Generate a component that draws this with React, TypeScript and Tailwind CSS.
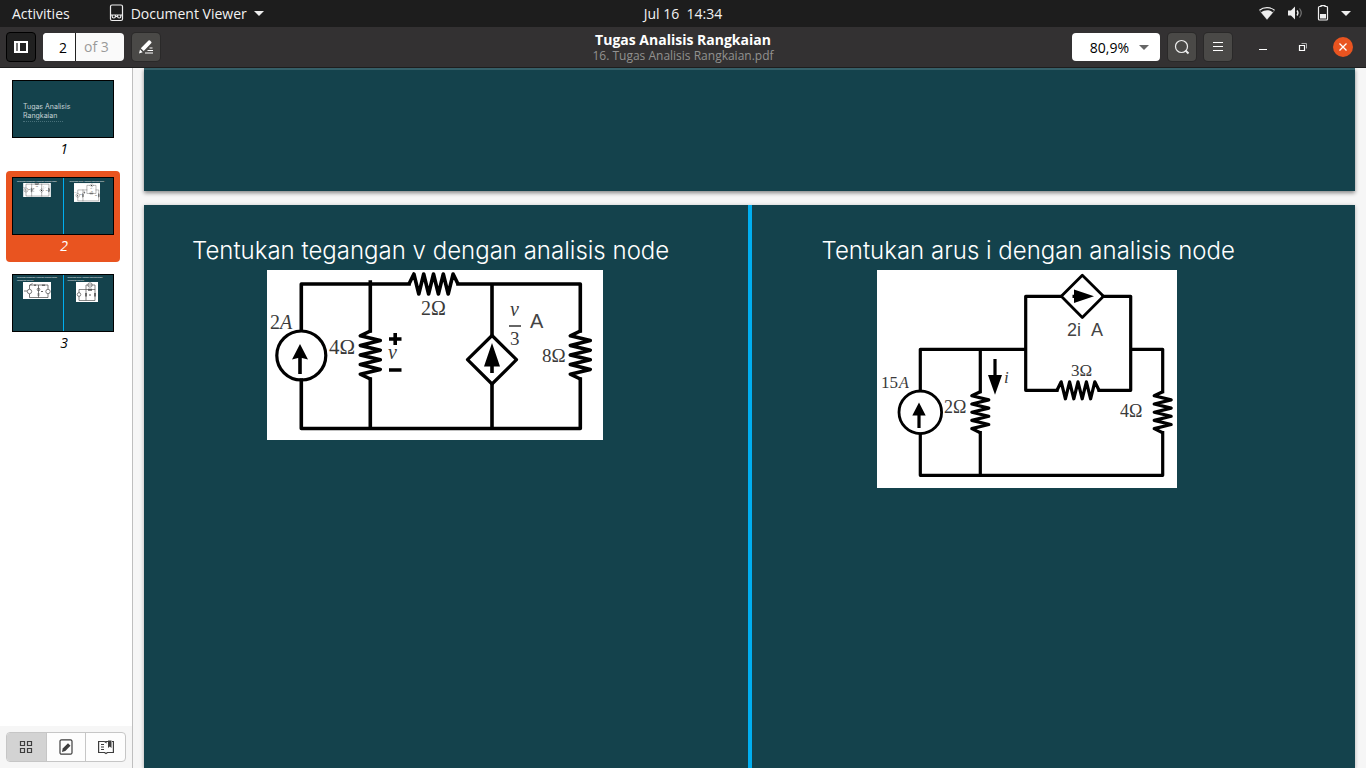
import React from "react";

const vZig = (x: number, y1: number, y2: number, amp: number) => {
  const step = (y2 - y1) / 10;
  const pts = [`${x},${y1}`];
  for (let i = 1; i < 10; i++) pts.push(`${x + (i % 2 ? -amp : amp)},${y1 + step * i}`);
  pts.push(`${x},${y2}`);
  return pts.join(" ");
};

const hZig = (y: number, x1: number, x2: number, amp: number) => {
  const step = (x2 - x1) / 10;
  const pts = [`${x1},${y}`];
  for (let i = 1; i < 10; i++) pts.push(`${x1 + step * i},${y + (i % 2 ? -amp : amp)}`);
  pts.push(`${x2},${y}`);
  return pts.join(" ");
};

const serif = "fill-[#3a3a3a] font-['Liberation_Serif',serif]";
const sans = "fill-[#444] font-['Liberation_Sans',sans-serif]";

function CircuitVoltage({ className }: { className: string }) {
  return (
    <svg viewBox="0 0 336 170" className={className} role="img" aria-label="Circuit with a 2 A source and v/3 dependent source">
      <rect width="336" height="170" fill="#fff" />
      <g fill="none" stroke="#000" strokeWidth="3.6" strokeLinejoin="round">
        <path d="M34.3 60V14H142M191 14H313.3V61M313.3 109V158.5H34.3V110M103.3 12V61M103.3 109V158.5M225 14V65M225 114V158.5" strokeLinecap="square" />
        <polyline points={hZig(14, 142, 191, 10)} />
        <polyline points={vZig(103.3, 61, 109, 10)} />
        <polyline points={vZig(313.3, 61, 109, 10)} />
        <circle cx="34.3" cy="85.5" r="24.5" strokeWidth="3.2" />
        <path d="M225 65.5L249.5 89.7L225 114L200.5 89.7Z" strokeWidth="3.2" />
        <path d="M33 86V104M225 94V103" />
        <path d="M122 69H134.5M128.2 63V75M122 100H134.5" />
      </g>
      <path d="M33 74L41 89.5L33 87.5L25 89.5ZM225 73L233 96.5H217Z" />
      <g fontSize="20" className={serif}>
        <text x="3" y="59">2<tspan fontStyle="italic">A</tspan></text>
        <text x="154" y="45" fontSize="20">2Ω</text>
        <text x="62" y="84" fontSize="21">4Ω</text>
        <text x="275" y="92" fontSize="19">8Ω</text>
        <text x="121" y="89" fontStyle="italic">v</text>
        <text x="243" y="46" fontStyle="italic">v</text>
        <text x="243" y="75" fontSize="19">3</text>
      </g>
      <path d="M242 56H254" stroke="#333" strokeWidth="1.5" />
      <text x="263" y="58" fontSize="20" className={sans}>A</text>
    </svg>
  );
}

function CircuitCurrent({ className }: { className: string }) {
  return (
    <svg viewBox="0 0 300 218" className={className} role="img" aria-label="Circuit with a 15 A source and 2i dependent source">
      <rect width="300" height="218" fill="#fff" />
      <g fill="none" stroke="#000" strokeWidth="3.2" strokeLinejoin="round">
        <path d="M43.3 120V79.3H148.7M184 26.3H148.7V120.3H180M222 120.3H253.7V26.3H226M253.7 79.3H285.7V121.7M285.7 162.7V205.3H43.3V164M103.3 79.3V121.7M103.3 162.7V205.3" strokeLinecap="square" />
        <polyline points={hZig(120.3, 180, 222, 8.5)} />
        <polyline points={vZig(103.3, 121.7, 162.7, 8.5)} />
        <polyline points={vZig(285.7, 121.7, 162.7, 8.5)} />
        <circle cx="43.3" cy="142.3" r="21.3" strokeWidth="2.8" />
        <path d="M205.3 5.3L226.5 26.3L205.3 47.5L184.3 26.3Z" strokeWidth="2.8" />
        <path d="M42 143V158M118 89V107M195.5 26.3H199" />
      </g>
      <path d="M42 132.5L48.7 145.5H35.3ZM118 124.7L111 105H125ZM217 26.3L197 33V19.5Z" />
      <g fontSize="17" className={serif}>
        <text x="4" y="118">15</text>
        <text x="22" y="118" fontSize="16" fontStyle="italic">A</text>
        <text x="67" y="143" fontSize="18">2Ω</text>
        <text x="127" y="113" fontStyle="italic">i</text>
        <text x="194" y="106">3Ω</text>
        <text x="243" y="147" fontSize="18">4Ω</text>
      </g>
      <g fontSize="18" className={sans}>
        <text x="190" y="66">2i</text>
        <text x="214" y="66">A</text>
      </g>
    </svg>
  );
}

function MiniCircuitLeft() {
  return (
    <svg viewBox="0 0 28 17" className="block h-[17px] w-7">
      <rect width="28" height="17" fill="#fff" />
      <g fill="none" stroke="#444" strokeWidth="0.7">
        <path d="M6.5 7V3H25V7M6.5 12V15.5H25V12M15.5 3V15.5M7 3L9.5 1.5M1 9H4" />
        <circle cx="6.5" cy="9.5" r="2.2" />
        <circle cx="25" cy="9.5" r="2.2" />
        <circle cx="15.5" cy="7.5" r="1.3" />
      </g>
      <path d="M11 2.5h2v1.5h-2zM19 2.5h3v1.5h-3zM14.7 11h1.6v3h-1.6zM18 9h2v1h-2z" fill="#666" />
    </svg>
  );
}

function MiniCircuitRight() {
  return (
    <svg viewBox="0 0 22 20" className="block h-5 w-[22px]">
      <rect width="22" height="20" fill="#fff" />
      <g fill="none" stroke="#555" strokeWidth="0.7">
        <path d="M3 11V7.500H19V18.500H3V14M10 7.500V18.500M10 7.500V3H19V8" />
        <circle cx="3" cy="12.5" r="1.8" />
        <circle cx="14" cy="3" r="2.2" />
      </g>
      <path d="M12 6.800h4v2h-4zM9.200 11h1.600v3.500h-1.600zM18.200 11h1.600v3.500h-1.600zM13 12.500h2v1h-2z" fill="#555" />
    </svg>
  );
}

const tiny = "block h-[3px] whitespace-nowrap text-[2px] leading-[3px] text-white";

function Thumbnail({ page, selected, children }: { page: number; selected?: boolean; children: React.ReactNode }) {
  return (
    <button
      type="button"
      aria-current={selected ? "page" : undefined}
      className={
        selected
          ? "flex h-[91px] w-full flex-col items-center rounded bg-[#e95420] px-1.5 pt-1.5 text-white"
          : "flex h-[91px] w-full flex-col items-center rounded px-1.5 pt-1.5 text-black"
      }
    >
      <span className="block h-[58px] w-full overflow-hidden border border-black bg-[#14424c] text-left">{children}</span>
      <span className="mt-px pl-0.5 text-[14px] leading-5 italic">{page}</span>
    </button>
  );
}

function Sidebar() {
  return (
    <aside className="flex w-[133px] shrink-0 flex-col border-r border-[#bfbfbf] bg-white">
      <div className="flex flex-1 flex-col gap-1.5 px-1.5 pt-1.5 pr-3">
        <Thumbnail page={1}>
          <span className="flex flex-col pt-[21px] pl-2.5 font-['Inter',sans-serif] text-[7px] text-[#c5d2d5]">
            <span className="leading-[9px]">Tugas Analisis</span>
            <span className="leading-[9px]">Rangkaian</span>
            <span className="mt-px w-10 border-t border-dotted border-[#48707a]" />
          </span>
        </Thumbnail>
        <Thumbnail page={2} selected>
          <span className="grid h-full grid-cols-[1fr_1px_1fr]">
            <span className="flex min-w-0 flex-col pt-0.5 pl-1">
              <span className={tiny}>Tentukan tegangan v dengan analisis node</span>
              <CircuitVoltage className="ml-1.5 block h-3.5 w-7" />
            </span>
            <span className="bg-[#00aeef]" />
            <span className="flex min-w-0 flex-col pt-0.5 pl-1.5">
              <span className={tiny}>Tentukan arus i dengan analisis node</span>
              <CircuitCurrent className="ml-1 block h-[19px] w-[26px]" />
            </span>
          </span>
        </Thumbnail>
        <Thumbnail page={3}>
          <span className="grid h-full grid-cols-[1fr_1px_1fr]">
            <span className="flex min-w-0 flex-col pt-px pl-1">
              <span className={tiny}>Tentukan tegangan v dengan analisis mesh</span>
              <span className={tiny}>rangkaian berikut</span>
              <span className="pl-1.5"><MiniCircuitLeft /></span>
            </span>
            <span className="bg-[#00aeef]" />
            <span className="flex min-w-0 flex-col pt-px pl-1">
              <span className={tiny}>Tentukan arus i dengan analisis mesh</span>
              <span className={tiny}>rangkaian berikut</span>
              <span className="pl-2"><MiniCircuitRight /></span>
            </span>
          </span>
        </Thumbnail>
      </div>
      <div className="flex h-[42px] items-start bg-[#f6f6f6] px-1.5 pt-1.5">
        <div className="flex h-[30px] w-[120px] overflow-hidden rounded border border-[#c6c6c6] bg-[#fdfdfd]">
          <button type="button" aria-label="Thumbnails" className="flex flex-1 items-center justify-center border-r border-[#c6c6c6] bg-[#d3d3d3]">
            <svg viewBox="0 0 16 16" className="size-4" fill="none" stroke="#3d3d3d" strokeWidth="1.2">
              <path d="M2.500 2.500h4v4h-4zM9.500 2.500h4v4h-4zM2.500 9.500h4v4h-4zM9.500 9.500h4v4h-4z" />
            </svg>
          </button>
          <button type="button" aria-label="Annotations" className="flex flex-1 items-center justify-center border-r border-[#c6c6c6]">
            <svg viewBox="0 0 16 16" className="size-4" fill="none" stroke="#3d3d3d" strokeWidth="1.2">
              <rect x="2" y="0.8" width="12" height="14.4" rx="1.5" />
              <path d="M4 13L4.700 9.500L10 4.200L12.500 6.700L7.300 12Z" fill="#3d3d3d" stroke="none" />
            </svg>
          </button>
          <button type="button" aria-label="Bookmarks" className="flex flex-1 items-center justify-center">
            <svg viewBox="0 0 16 16" className="size-4" fill="none" stroke="#3d3d3d" strokeWidth="1.2">
              <path d="M6.500 2.500H0.600V13.500H6.500L8 14.500L9.500 13.500H15.400V2.500H14M6.500 2.500L8 3.500V2.500H10M3 5.500H6M3 8H6M3 10.500H6" />
              <path d="M10 1.500H13.500V9L11.750 7.500L10 9Z" fill="#3d3d3d" stroke="none" />
            </svg>
          </button>
        </div>
      </div>
    </aside>
  );
}

function TopBar() {
  return (
    <div className="grid h-[27px] shrink-0 grid-cols-[1fr_auto_1fr] items-center bg-[#1d1d1d] px-3 pb-px text-[14px] text-[#f2f2f2]">
      <div className="flex items-center gap-[38px]">
        <button type="button">Activities</button>
        <button type="button" className="flex items-center gap-[7px]">
          <svg viewBox="0 0 16 18" className="h-[18px] w-4" fill="none" stroke="#eee" strokeWidth="1.2">
            <rect x="2.5" y="1" width="12" height="15.5" rx="1.5" />
            <path d="M2.500 11H14.500M7.500 12.500H9.500" />
            <path d="M4.200 11V12.500Q4.200 14 5.800 14Q7.400 14 7.400 12.500V11M9.600 11V12.500Q9.600 14 11.200 14Q12.800 14 12.800 12.500V11" />
          </svg>
          Document Viewer
          <svg viewBox="0 0 10 5" className="h-[5px] w-2.5" fill="#eee"><path d="M0 0H10L5 5Z" /></svg>
        </button>
      </div>
      <button type="button" className="whitespace-pre">Jul 16  14:34</button>
      <div className="flex items-center justify-end pr-[3px]">
        <svg viewBox="0 0 16 16" className="mr-3 size-4" fill="#eee">
          <path d="M8 14.500L0.500 5.500" fill="none" stroke="#777" strokeWidth="0.8" />
          <path d="M8 14.500L15.500 5.500" fill="none" stroke="#777" strokeWidth="0.8" />
          <path d="M8 14.500L2 7.300C5.500 4.500 10.500 4.500 14 7.300Z" />
          <path d="M0.500 5.300C4.500 1.800 11.500 1.800 15.500 5.300" fill="none" stroke="#eee" strokeWidth="1.2" />
        </svg>
        <svg viewBox="0 0 16 16" className="mr-3 size-4" fill="#eee">
          <path d="M1 5.500H4L8 1.500V14.500L4 10.500H1Z" />
          <path d="M10 5.500Q12 8 10 10.500" fill="none" stroke="#eee" strokeWidth="1.3" />
          <path d="M12.500 3.500Q16 8 12.500 12.500" fill="none" stroke="#777" strokeWidth="1.2" />
        </svg>
        <svg viewBox="0 0 16 16" className="mr-2.5 size-4">
          <path d="M6 1.500H4.500Q3.500 1.500 3.500 2.500V14Q3.500 15 4.500 15H11.500Q12.500 15 12.500 14V2.500Q12.500 1.500 11.500 1.500H10V0.700H6Z" fill="none" stroke="#eee" strokeWidth="1.2" />
          <path d="M5 9H11V13.500H5Z" fill="#eee" />
        </svg>
        <svg viewBox="0 0 10 5" className="h-[5px] w-2.5" fill="#eee"><path d="M0 0H10L5 5Z" /></svg>
      </div>
    </div>
  );
}

const tool = "flex size-7 items-center justify-center rounded bg-[#4a4947] shadow-[0_0_0_1px_#2a2929]";

function HeaderBar() {
  return (
    <header className="grid h-[41px] shrink-0 grid-cols-[1fr_auto_1fr] items-center border-b border-[#1e1e1e] bg-[#333132] px-1.5 text-[14px]">
      <div className="flex items-center">
        <button type="button" aria-label="Toggle side pane" className="mr-[7px] flex size-[30px] items-center justify-center rounded border border-black bg-[#202020]">
          <svg viewBox="0 0 16 16" className="size-4">
            <path d="M1 2H15V14H1ZM7 4V12H13V4Z" fill="#fff" fillRule="evenodd" />
            <path d="M3 4H5V12H3Z" fill="#777" />
          </svg>
        </button>
        <div className="flex h-7 w-[81px] overflow-hidden rounded bg-[#fafafa]">
          <input aria-label="Page" defaultValue="2" className="w-[33px] border-r border-[#222] bg-white pr-2 text-right text-black outline-none" />
          <span className="pl-2 leading-7 text-[#9a9a9a]">of 3</span>
        </div>
        <button type="button" aria-label="Annotate" className={"ml-2 " + tool}>
          <svg viewBox="0 0 16 16" className="size-4" fill="#fff">
            <path d="M1 14.500L2 10.500L4.700 13.200ZM2.800 9.200L10.500 1.500Q11.200 0.800 12 1.500L13.200 2.700Q14 3.500 13.200 4.200L5.700 12Z" />
            <path d="M11.500 8.500H14.500V9.500H11.500ZM9.500 11H15V12H9.500ZM7 13.500H15V14.500H7Z" />
          </svg>
        </button>
      </div>
      <div className="pt-0.5 text-center">
        <h1 className="text-[14px] leading-4 font-bold text-white">Tugas Analisis Rangkaian</h1>
        <p className="text-[12px] leading-4 text-[#929190]">16. Tugas Analisis Rangkaian.pdf</p>
      </div>
      <div className="flex items-center justify-end pr-[7px]">
        <button type="button" aria-label="Zoom level" className="mr-2 flex h-7 w-[88px] items-center justify-end gap-2.5 rounded bg-white pr-[11px] text-black">
          80,9%
          <svg viewBox="0 0 10 5" className="h-[5px] w-2.5" fill="#666"><path d="M0 0H10L5 5Z" /></svg>
        </button>
        <button type="button" aria-label="Search" className={"mr-2 " + tool}>
          <svg viewBox="0 0 16 16" className="size-4" fill="none" stroke="#eee" strokeWidth="1.2">
            <circle cx="7.5" cy="7.5" r="6" />
            <path d="M11.500 11.500L14.500 14.500" strokeWidth="2" />
          </svg>
        </button>
        <button type="button" aria-label="Menu" className={tool}>
          <svg viewBox="0 0 16 16" className="size-4" stroke="#fff" strokeWidth="1"><path d="M3 3.500H13M3 7.500H13M3 11.500H13" /></svg>
        </button>
        <button type="button" aria-label="Minimize" className="ml-[23px] size-4">
          <svg viewBox="0 0 16 16" className="size-4" stroke="#fff"><path d="M4 10.500H12" /></svg>
        </button>
        <button type="button" aria-label="Restore" className="ml-6 size-4">
          <svg viewBox="0 0 16 16" className="size-4" fill="none" stroke="#fff">
            <path d="M4.500 6.500H9.500V11.500H4.500Z" strokeWidth="1.2" />
            <path d="M6.500 4.500H11.500V9.500" stroke="#aaa" />
          </svg>
        </button>
        <button type="button" aria-label="Close" className="ml-[22px] flex size-5 items-center justify-center rounded-full bg-[#e95420]">
          <svg viewBox="0 0 8 8" className="size-2" stroke="#fff" strokeWidth="1.3"><path d="M0.500 0.500L7.500 7.500M7.500 0.500L0.500 7.500" /></svg>
        </button>
      </div>
    </header>
  );
}

const slideTitle = "pb-0.5 font-['Inter',sans-serif] text-[24px] leading-[34px] font-light whitespace-nowrap text-white";

export default function App() {
  return (
    <div className="flex h-screen flex-col overflow-hidden font-['Open_Sans','Noto_Sans',sans-serif]">
      <TopBar />
      <HeaderBar />
      <div className="flex min-h-0 flex-1">
        <Sidebar />
        <main className="flex min-w-0 flex-1 flex-col gap-3.5 overflow-hidden bg-[#f6f6f6] px-[11px]">
          <section aria-label="Page 1" className="h-[123px] shrink-0 border-t-2 border-[#356069] bg-[#14424c] shadow-[0_2px_4px_rgba(0,0,0,0.45)]" />
          <section aria-label="Page 2" className="grid flex-1 grid-cols-[1fr_4px_1fr] bg-[#14424c] shadow-[0_1px_4px_rgba(0,0,0,0.3)]">
            <div className="min-w-0 pt-[29px]">
              <h2 className={"pl-12 " + slideTitle}>Tentukan tegangan v dengan analisis node</h2>
              <CircuitVoltage className="ml-[123px] block h-[170px] w-[336px]" />
            </div>
            <div className="bg-[#00aeef]" />
            <div className="min-w-0 pt-[29px]">
              <h2 className={"pl-[70px] " + slideTitle}>Tentukan arus i dengan analisis node</h2>
              <CircuitCurrent className="ml-[125px] block h-[218px] w-[300px]" />
            </div>
          </section>
        </main>
      </div>
    </div>
  );
}
